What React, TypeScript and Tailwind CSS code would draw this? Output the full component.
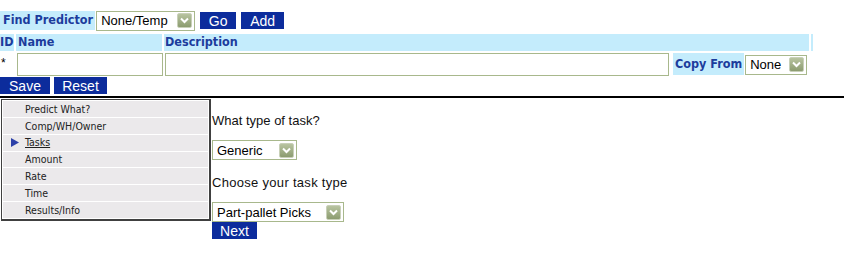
import React from 'react'

const LABEL =
  'bg-[#c4ecfc] text-[#1c3c9c] font-bold text-[12.5px] leading-none flex items-center px-[3px] whitespace-nowrap shrink-0 ' +
  "[font-family:'DejaVu_Sans_Condensed','DejaVu_Sans',sans-serif]"

const BUTTON =
  'bg-[#0c2c9c] text-white text-[14px] leading-none flex items-center justify-center h-[17px] ' +
  "[font-family:'Liberation_Sans',Arial,sans-serif]"

const MENU = [
  'Predict What?',
  'Comp/WH/Owner',
  'Tasks',
  'Amount',
  'Rate',
  'Time',
  'Results/Info',
]

function Arrow() {
  return (
    <div className="w-[15px] h-[15px] rounded-[2px] bg-gradient-to-b from-[#b8c4a0] to-[#8c9c70] border border-[#c8d0b8] flex items-center justify-center">
      <svg width="9" height="7" viewBox="0 0 9 7">
        <path d="M1 1.5 L4.5 5 L8 1.5" fill="none" stroke="white" strokeWidth="2" />
      </svg>
    </div>
  )
}

function Select({ value, width }: { value: string; width: string }) {
  return (
    <div
      className={`${width} h-[20px] border border-[#a8b88c] bg-white flex items-center justify-between pl-[4px] pr-[2px] text-[13px] text-black leading-none [font-family:'Liberation_Sans',Arial,sans-serif]`}
    >
      <span>{value}</span>
      <Arrow />
    </div>
  )
}

export default function App() {
  return (
    <div className="w-[844px] h-[260px] bg-white relative overflow-hidden [font-family:'Liberation_Sans',Arial,sans-serif]">
      <div className="h-[11px]" />
      <div className="flex items-center h-[19px]">
        <div className={`${LABEL} h-[19px] pr-[2px]`}>Find Predictor</div>
        <div className="ml-[1px]">
          <Select value="None/Temp" width="w-[99px]" />
        </div>
        <div className={`${BUTTON} ml-[5px] w-[36px]`}>Go</div>
        <div className={`${BUTTON} ml-[5px] w-[43px]`}>Add</div>
      </div>

      <div className="flex mt-[4px] h-[17px] gap-[2px]">
        <div className={`${LABEL} w-[14px] pl-0`}>ID</div>
        <div className={`${LABEL} w-[146px] pl-[2px]`}>Name</div>
        <div className={`${LABEL} w-[645px] pl-[1px]`}>Description</div>
        <div className="w-[2px] bg-[#c4ecfc]" />
      </div>

      <div className="flex items-center mt-[2px] h-[23px]">
        <div className="w-[17px] text-[12px] leading-none text-black pl-[1px] -mt-[4px]">*</div>
        <div className="w-[146px] h-[23px] border border-[#a8b88c] bg-white" />
        <div className="ml-[2px] w-[504px] h-[23px] border border-[#a8b88c] bg-white" />
        <div className={`${LABEL} ml-[4px] h-[22px] pl-[2px] pr-[2px] -mt-[1px]`}>Copy From</div>
        <div className="ml-[1px]">
          <Select value="None" width="w-[62px]" />
        </div>
      </div>

      <div className="flex mt-[1px] gap-[4px]">
        <div className={`${BUTTON} w-[50px]`}>Save</div>
        <div className={`${BUTTON} w-[53px]`}>Reset</div>
      </div>

      <div className="h-[2px] bg-black mt-[2px]" />

      <div className="flex mt-[1px]">
        <div className="ml-[1px] w-[210px] h-[122px] border border-[#404040] border-r-2 border-b-2 bg-white flex flex-col gap-[1px] p-[1px] pt-[1px]">
          {MENU.map((item) => (
            <div
              key={item}
              className="h-[16px] bg-[#ebe9eb] flex items-center text-[10.5px] leading-none text-[#222] [font-family:'DejaVu_Sans_Condensed','DejaVu_Sans',sans-serif]"
            >
              <div className="w-[22px] flex justify-center pl-[2px]">
                {item === 'Tasks' && (
                  <svg width="8" height="9" viewBox="0 0 8 9">
                    <path d="M0 0 L8 4.5 L0 9 Z" fill="#2c40a8" />
                  </svg>
                )}
              </div>
              <span className={item === 'Tasks' ? 'underline' : ''}>{item}</span>
            </div>
          ))}
        </div>

        <div className="ml-[1px] flex flex-col text-[13px] text-[#111] leading-none">
          <div className="mt-[15px]">What type of task?</div>
          <div className="mt-[13px]">
            <Select value="Generic" width="w-[85px]" />
          </div>
          <div className="mt-[16px] tracking-[0.3px]">Choose your task type</div>
          <div className="mt-[13px]">
            <Select value="Part-pallet Picks" width="w-[132px]" />
          </div>
          <div className={`${BUTTON} w-[45px]`}>Next</div>
        </div>
      </div>
    </div>
  )
}
